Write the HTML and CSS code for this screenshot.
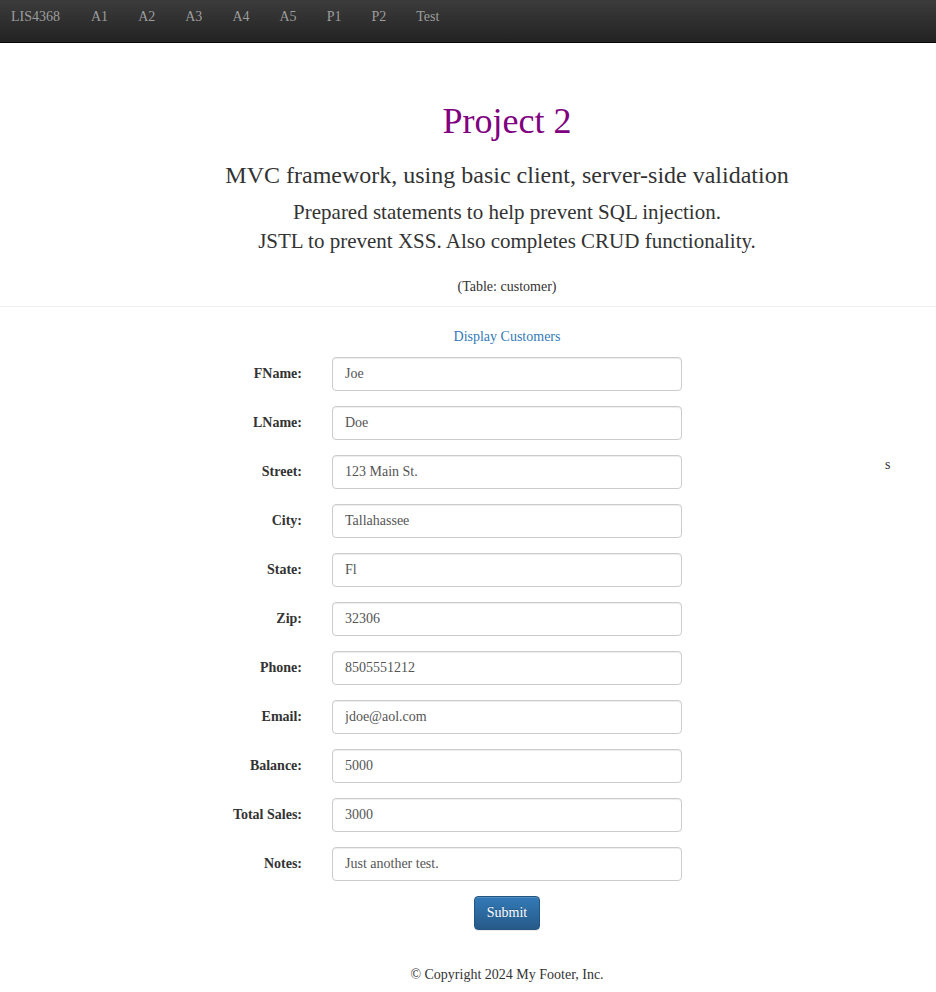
FILE: index.html
```html
<!DOCTYPE html>
<html lang="en">
<head>
<meta charset="utf-8">
<title>LIS4368 - Project 2</title>
<link rel="stylesheet" href="styles.css">
</head>
<body>
<nav class="navbar">
  <a class="brand" href="#">LIS4368</a>
  <a class="nav-link" href="#">A1</a>
  <a class="nav-link" href="#">A2</a>
  <a class="nav-link" href="#">A3</a>
  <a class="nav-link" href="#">A4</a>
  <a class="nav-link" href="#">A5</a>
  <a class="nav-link" href="#">P1</a>
  <a class="nav-link" href="#">P2</a>
  <a class="nav-link" href="#">Test</a>
</nav>

<header class="page-header wrap">
  <h1 class="title">Project 2</h1>
  <h2 class="subtitle">MVC framework, using basic client, server-side validation</h2>
  <p class="lead">Prepared statements to help prevent SQL injection.<br>JSTL to prevent XSS. Also completes CRUD functionality.</p>
  <p class="table-note">(Table: customer)</p>
</header>

<hr class="divider">

<main class="wrap">
  <p class="display-link"><a href="#">Display Customers</a></p>
  <form class="cust-form">
    <div class="form-row"><label class="lbl">FName:</label><input class="ctl" type="text" value="Joe"></div>
    <div class="form-row"><label class="lbl">LName:</label><input class="ctl" type="text" value="Doe"></div>
    <div class="form-row"><label class="lbl">Street:</label><input class="ctl" type="text" value="123 Main St."><span class="stray">s</span></div>
    <div class="form-row"><label class="lbl">City:</label><input class="ctl" type="text" value="Tallahassee"></div>
    <div class="form-row"><label class="lbl">State:</label><input class="ctl" type="text" value="Fl"></div>
    <div class="form-row"><label class="lbl">Zip:</label><input class="ctl" type="text" value="32306"></div>
    <div class="form-row"><label class="lbl">Phone:</label><input class="ctl" type="text" value="8505551212"></div>
    <div class="form-row"><label class="lbl">Email:</label><input class="ctl" type="text" value="jdoe@aol.com"></div>
    <div class="form-row"><label class="lbl">Balance:</label><input class="ctl" type="text" value="5000"></div>
    <div class="form-row"><label class="lbl">Total Sales:</label><input class="ctl" type="text" value="3000"></div>
    <div class="form-row"><label class="lbl">Notes:</label><input class="ctl" type="text" value="Just another test."></div>
    <div class="form-row btn-row"><span></span><button class="btn-primary" type="button">Submit</button></div>
  </form>
  <footer class="footer">© Copyright 2024 My Footer, Inc.</footer>
</main>
</body>
</html>
```
FILE: styles.css
```css
* { box-sizing: border-box; }

body {
  margin: 0;
  font-family: "Liberation Serif", "Times New Roman", serif;
  font-size: 14px;
  line-height: 20px;
  color: #333;
  background: #fff;
}

.navbar {
  display: flex;
  height: 43px;
  padding-top: 7px;
  background: linear-gradient(to bottom, #3c3c3c 0%, #222 100%);
  border-bottom: 1px solid #080808;
}

.navbar a {
  color: #9d9d9d;
  text-decoration: none;
  font-size: 14px;
  line-height: 20px;
}

.brand { padding: 0 16px 0 11px; }
.nav-link { padding: 0 15px; }

.wrap {
  padding-left: 78px;
  text-align: center;
}

.title {
  margin: 58px 0 0;
  font-size: 36px;
  line-height: 40px;
  font-weight: normal;
  color: #800080;
}

.subtitle {
  margin: 19px 0 0;
  font-size: 24px;
  line-height: 30px;
  font-weight: normal;
  color: #333;
}

.lead {
  margin: 8px 0 0;
  font-size: 21px;
  line-height: 29px;
}

.table-note {
  margin: 21px 0 0;
}

.divider {
  margin: 9px 0 0;
  border: 0;
  border-top: 1px solid #eee;
  height: 0;
}

.display-link {
  margin: 20px 0 0;
}

.display-link a {
  color: #337ab7;
  text-decoration: none;
}

.cust-form {
  margin-top: 10px;
  text-align: left;
}

.form-row {
  display: grid;
  grid-template-columns: 224px 350px 1fr;
  column-gap: 30px;
  align-items: center;
  margin-bottom: 15px;
}

.lbl {
  text-align: right;
  font-weight: bold;
  color: #333;
}

.ctl {
  height: 34px;
  width: 350px;
  padding: 6px 12px;
  font-family: "Liberation Serif", "Times New Roman", serif;
  font-size: 14px;
  line-height: 20px;
  color: #555;
  background: #fff;
  border: 1px solid #ccc;
  border-radius: 4px;
  box-shadow: inset 0 1px 1px rgba(0,0,0,.075);
}

.stray {
  align-self: start;
  padding-left: 173px;
  color: #333;
}

.btn-row {
  margin-bottom: 0;
}

.btn-primary {
  justify-self: center;
  height: 34px;
  padding: 6px 12px;
  font-family: "Liberation Serif", "Times New Roman", serif;
  font-size: 14px;
  font-weight: normal;
  line-height: 20px;
  color: #fff;
  background: linear-gradient(to bottom, #337ab7 0%, #265a88 100%);
  border: 1px solid #245580;
  border-radius: 4px;
  text-shadow: 0 -1px 0 rgba(0,0,0,.2);
  box-shadow: inset 0 1px 0 rgba(255,255,255,.15), 0 1px 1px rgba(0,0,0,.075);
}

.footer {
  margin-top: 35px;
  padding-bottom: 18px;
}
```
